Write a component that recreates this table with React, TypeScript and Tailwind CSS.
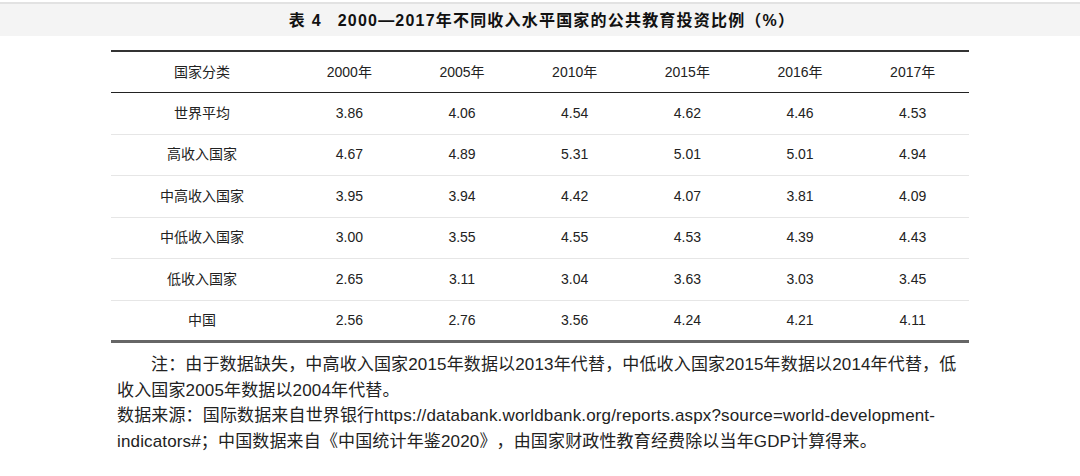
import React from "react";

const font = { fontFamily: '"Liberation Sans", "Noto Sans CJK SC", sans-serif' };

const header = ["国家分类", "2000年", "2005年", "2010年", "2015年", "2016年", "2017年"];
const rows: string[][] = [
  ["世界平均", "3.86", "4.06", "4.54", "4.62", "4.46", "4.53"],
  ["高收入国家", "4.67", "4.89", "5.31", "5.01", "5.01", "4.94"],
  ["中高收入国家", "3.95", "3.94", "4.42", "4.07", "3.81", "4.09"],
  ["中低收入国家", "3.00", "3.55", "4.55", "4.53", "4.39", "4.43"],
  ["低收入国家", "2.65", "3.11", "3.04", "3.63", "3.03", "3.45"],
  ["中国", "2.56", "2.76", "3.56", "4.24", "4.21", "4.11"],
];

function Cells({ cells }: { cells: string[] }) {
  return (
    <>
      {cells.map((c, i) => (
        <div
          key={i}
          className={
            i === 0
              ? "w-[182px] shrink-0 flex items-center justify-center"
              : "flex-1 flex items-center justify-center"
          }
        >
          {c}
        </div>
      ))}
    </>
  );
}

export default function App() {
  return (
    <div className="w-[1080px] h-[476px] bg-white text-[#222] overflow-hidden" style={font}>
      <div className="pt-[2px]">
        <div className="border-t-2 border-[#e2e2e2] bg-[#f4f4f4] h-[34px] flex items-center justify-center">
          <div className="text-[16px] font-bold text-[#111] tracking-[1.2px] flex items-center pl-[4px] pt-[1px]">
            <span>表 4</span>
            <span className="ml-[16px]">2000—2017年不同收入水平国家的公共教育投资比例（%）</span>
          </div>
        </div>
      </div>

      <div className="mt-[14px] mx-[111px] border-t-2 border-[#333] text-[14px]">
        <div className="h-[41px] flex border-b border-[#222]">
          <Cells cells={header} />
        </div>
        {rows.map((r, i) => (
          <div
            key={i}
            className={
              i === rows.length - 1
                ? "h-[42.5px] flex border-b-[3px] border-[#666]"
                : "h-[41.5px] flex border-b border-[#e6e6e6]"
            }
          >
            <Cells cells={r} />
          </div>
        ))}
      </div>

      <div className="mt-[9px] ml-[117px] w-[846px] text-[17px] leading-[25.5px] text-left tracking-[0.15px] text-[#222] [text-spacing-trim:space-all]">
        <p className="indent-[2em]">
          注：由于数据缺失，中高收入国家2015年数据以2013年代替，中低收入国家2015年数据以2014年代替，低收入国家2005年数据以2004年代替。
        </p>
        <p>
          数据来源：国际数据来自世界银行https://databank.worldbank.org/reports.aspx?source=world-development-indicators#；中国数据来自《中国统计年鉴2020》，由国家财政性教育经费除以当年GDP计算得来。
        </p>
      </div>
    </div>
  );
}
